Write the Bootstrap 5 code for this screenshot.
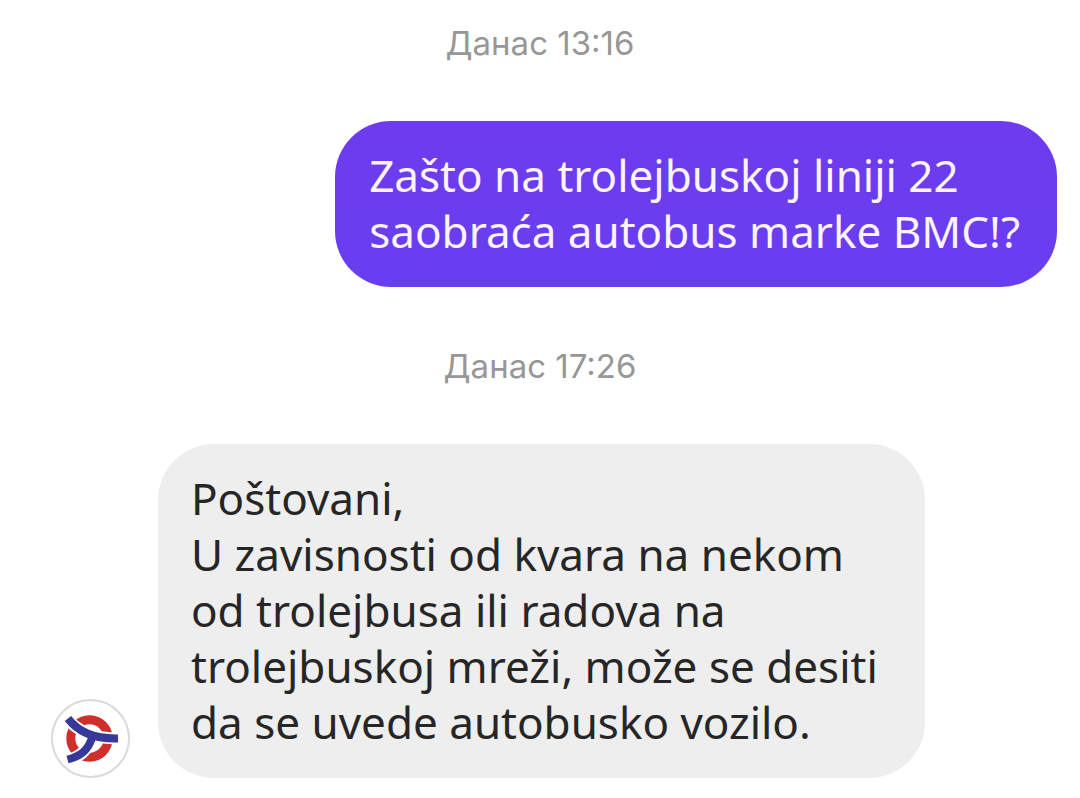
<!DOCTYPE html>
<html lang="sr">
<head>
<meta charset="utf-8">
<meta name="viewport" content="width=device-width, initial-scale=1">
<title>Poruke</title>
<link href="https://cdn.jsdelivr.net/npm/bootstrap@5.3.0/dist/css/bootstrap.min.css" rel="stylesheet">
<style>
body { font-family: "Noto Sans", sans-serif; background: #fff; }
.chat { padding: 15px 23px 20px 51px; }
.stamp { font-family: Inter, sans-serif; font-size: 33px; line-height: 56px; color: #979797; margin-right: 28px; }
.bubble { font-size: 44px; line-height: 56px; border-radius: 56px; padding: 26px 37px 28px 34px; }
.sent { background: linear-gradient(#6e3bee, #683ef0); color: #fbf3ff; margin: 50px 0 51px; }
.received { background: #eee; color: #262626; padding-left: 33px; padding-right: 47px; margin-top: 50px; }
.message-row { gap: 28px; }
.avatar { width: 79px; height: 79px; }
</style>
</head>
<body>
<main class="chat d-flex flex-column">
  <time class="stamp text-center">Данас 13:16</time>
  <div class="bubble sent align-self-end">Zašto na trolejbuskoj liniji 22<br>saobraća autobus marke BMC!?</div>
  <time class="stamp text-center">Данас 17:26</time>
  <div class="message-row d-flex align-items-end">
    <svg class="avatar flex-shrink-0" viewBox="0 0 79 79" role="img" aria-label="Avatar">
      <circle cx="39.5" cy="39.5" r="38.5" fill="#fff" stroke="#dadade" stroke-width="2"/>
      <circle cx="38.500" cy="39.500" r="18.700" fill="none" stroke="#cf2f2b" stroke-width="9"/>
      <g fill="none" stroke="#fff" stroke-width="12">
        <path d="M14 17C25 32 42 40 69 39.500"/>
        <path d="M15 62C29 58 36 52 41 38"/>
      </g>
      <g fill="none" stroke="#36389a" stroke-width="8">
        <path d="M17 19.500C27 33 44 40 67 39.500"/>
        <path d="M16.500 60.500C30 57 37 51 41 39"/>
      </g>
    </svg>
    <div class="bubble received">Poštovani,<br>U zavisnosti od kvara na nekom<br>od trolejbusa ili radova na<br>trolejbuskoj mreži, može se desiti<br>da se uvede autobusko vozilo.</div>
  </div>
</main>
<script src="https://cdn.jsdelivr.net/npm/bootstrap@5.3.0/dist/js/bootstrap.bundle.min.js"></script>
</body>
</html>
